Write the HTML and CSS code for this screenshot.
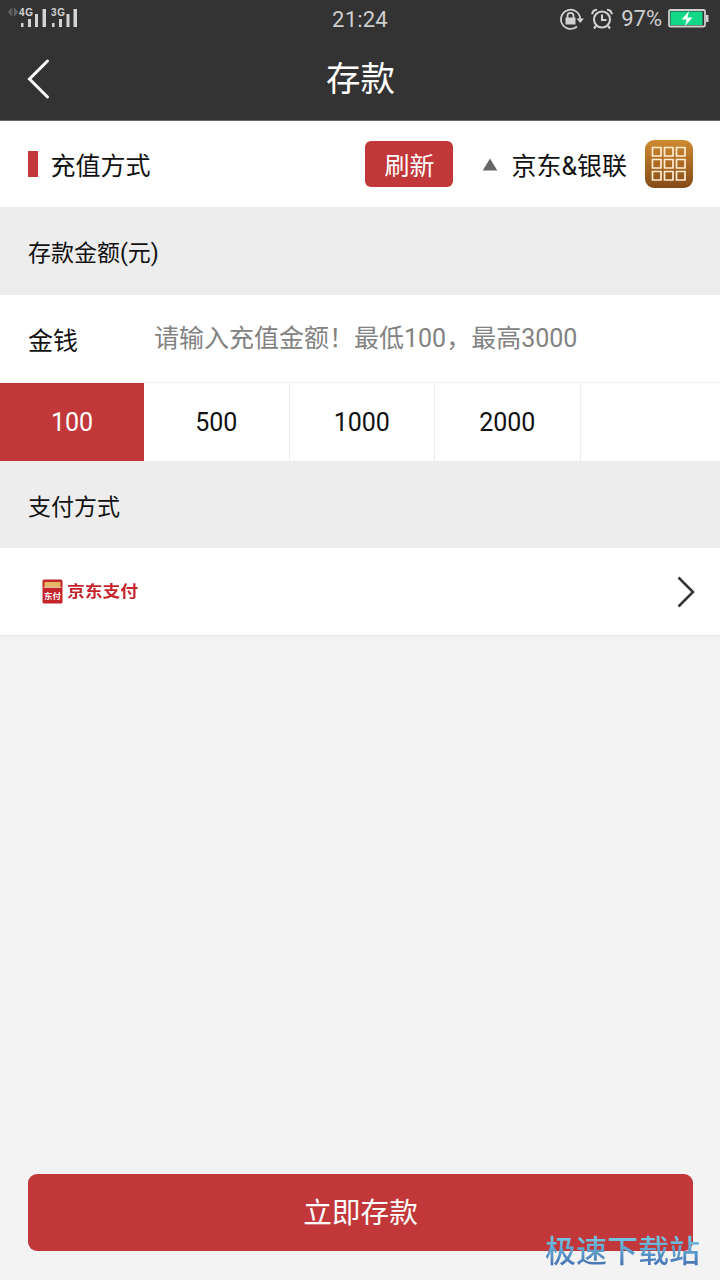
FILE: index.html
```html
<!DOCTYPE html>
<html lang="zh-CN">
<head>
<meta charset="utf-8">
<title>存款</title>
<link rel="stylesheet" href="styles.css">
</head>
<body>
<div class="screen">
  <div class="status">
    <svg class="signals" width="80" height="28" viewBox="0 0 80 28">
      <path fill="#666" d="M8 12l3-4v8zM12.500 8v8h-1V8zM14 8h1v8h-1zM15 8l3 4-3 4z"/>
      <g class="signal-label"><text x="19" y="16" textLength="14">4G</text><text x="51" y="16" textLength="14">3G</text></g>
      <path fill="#d4d4d4" d="M21 23h2.500v4H21zM28 19h3v8h-3zM35 14h3v13h-3zM42.500 9H46v18h-3.500zM52 23h2.500v4H52zM59 19h3v8h-3zM66.500 14h3v13h-3zM73.500 9H77v18h-3.500z"/>
    </svg>
    <span class="clock">21:24</span>
    <div class="status-right">
      <svg width="25" height="24" viewBox="0 0 25 24" fill="none" stroke="#d2d2d2" stroke-width="1.800">
        <path d="M18 19.500A9.600 9.600 0 1 1 21.200 12"/>
        <path d="M17.500 11.500h7.500L21.200 16z" fill="#d2d2d2" stroke="none"/>
        <path d="M6.500 10.500h10v7h-10z" fill="#d2d2d2" stroke="none"/>
        <path d="M8.500 11V8.800a3 3 0 0 1 6 0V11"/>
      </svg>
      <svg class="alarm" width="22" height="22" viewBox="0 0 22 22" fill="none" stroke="#d2d2d2" stroke-width="2.100">
        <circle cx="11" cy="11.500" r="8"/>
        <path d="M11 6.500v5.500h4.500M1.200 6.200Q1.500 2 6 1.700M20.800 6.200Q20.500 2 16 1.700M5 18l-2 2.500M17 18l2 2.500"/>
      </svg>
      <span class="percent">97%</span>
      <svg class="battery" width="41" height="19" viewBox="0 0 41 19">
        <rect x="1" y="1" width="36" height="16.500" rx="1.500" fill="#333" stroke="#cfcfcf" stroke-width="1.800"/>
        <rect x="2.500" y="2.500" width="32" height="13.500" fill="#10d887"/>
        <path d="M38 6h2.500v7H38z" fill="#cfcfcf"/>
        <path d="M21 2l-7.500 8.500h5L17 17l7.500-8.500h-5z" fill="#f5fff9"/>
      </svg>
    </div>
  </div>

  <header class="header">
    <svg class="back" width="24" height="42" viewBox="0 0 24 42"><path d="M20.500 3L2.500 21l18 18" fill="none" stroke="#fff" stroke-width="3" stroke-linecap="round"/></svg>
    <h1 class="title">存款</h1>
  </header>

  <section class="method">
    <i class="marker"></i>
    <span class="method-label">充值方式</span>
    <button class="refresh">刷新</button>
    <svg class="caret" width="16" height="13" viewBox="0 0 16 13"><path d="M8 .5L15.300 12.500H.700z" fill="#666"/></svg>
    <span class="channel">京东&amp;银联</span>
    <svg class="grid-icon" width="48" height="48" viewBox="0 0 48 48">
      <defs>
        <linearGradient id="bronze" x1="0" y1="0" x2="0" y2="1"><stop offset="0" stop-color="#d08a32"/><stop offset="1" stop-color="#854a17"/></linearGradient>
      </defs>
      <rect width="48" height="48" rx="9" fill="url(#bronze)"/>
      <path fill="none" stroke="#ffedd2" stroke-width="1.700" d="M7.500 7.500h8.500v8.500H7.500zM19.500 7.500h8.500v8.500h-8.500zM31.500 7.500H40v8.500h-8.500zM7.500 19.500h8.500v8.500H7.500zM19.500 19.500h8.500v8.500h-8.500zM31.500 19.500H40v8.500h-8.500zM7.500 31.500h8.500V40H7.500zM19.500 31.500h8.500V40h-8.500zM31.500 31.500H40V40h-8.500z"/>
    </svg>
  </section>

  <h2 class="section-title">存款金额(元)</h2>

  <label class="amount">
    <span class="amount-label">金钱</span>
    <input class="amount-input" type="text" placeholder="请输入充值金额！最低100，最高3000">
  </label>

  <div class="presets">
    <button class="preset preset-active">100</button>
    <button class="preset">500</button>
    <button class="preset">1000</button>
    <button class="preset">2000</button>
  </div>

  <h2 class="section-title section-pay">支付方式</h2>

  <div class="pay-row">
    <svg class="pay-icon" width="21" height="25" viewBox="0 0 21 25">
      <rect x=".5" y=".5" width="20" height="24" rx="1.500" fill="#c5242b"/>
      <path d="M2.500 3h16v5h-16z" fill="#e5b768"/>
      <path d="M1.500 8.500h18" stroke="#f3d9c9" stroke-width=".8"/>
      <text class="pay-icon-text" x="10.500" y="19.500" text-anchor="middle">东付</text>
    </svg>
    <span class="pay-name">京东支付</span>
    <svg class="chevron" width="18" height="32" viewBox="0 0 18 32"><path d="M1.500 1.500L16 16 1.500 30.500" fill="none" stroke="#333" stroke-width="2.500"/></svg>
  </div>

  <footer class="footer">
    <button class="submit">立即存款</button>
  </footer>
  <span class="watermark">极速下载站</span>
</div>
</body>
</html>
```

FILE: styles.css
```css
* { box-sizing: border-box; }
body { margin: 0; }
body, button, input { font-family: Roboto, "Noto Sans CJK SC", sans-serif; }
button { border: 0; padding: 0; background: none; color: #111; }
h1, h2 { margin: 0; font-weight: 400; }
svg { display: block; flex: none; }

.screen {
  position: relative;
  width: 720px;
  height: 1280px;
  display: flex;
  flex-direction: column;
  background: #f3f3f3;
  color: #111;
  overflow: hidden;
}

.status {
  height: 37px;
  display: grid;
  grid-template-columns: 1fr auto 1fr;
  background: #333;
  color: #cfcfcf;
}
.signal-label { font: bold 10px "Liberation Sans", sans-serif; fill: #d4d4d4; }
.clock { font-size: 22px; line-height: 39px; letter-spacing: .2px; }
.status-right { display: flex; justify-content: flex-end; align-items: center; padding: 0 11px 2px 0; }
.alarm { margin-left: 7px; }
.percent { margin: 0 6px 0 8px; font-size: 22px; line-height: 35px; }

.header {
  height: 84px;
  display: grid;
  grid-template-columns: 100px 1fr 100px;
  align-items: center;
  background: #333;
  border-bottom: 1px solid #666;
}
.back { margin-left: 27px; }
.title { padding-left: 1px; text-align: center; font-size: 34.500px; line-height: 82px; color: #fff; }

.method {
  height: 86px;
  display: flex;
  align-items: center;
  padding: 0 27px 0 28px;
  background: #fff;
  font-size: 25px;
}
.marker { width: 10px; height: 26px; background: #c1373a; }
.method-label { margin-left: 12.500px; }
.refresh {
  width: 88px;
  height: 46px;
  margin-left: auto;
  border-radius: 6px;
  background: #c1373a;
  color: #fff;
  font-size: 25px;
}
.caret { margin-left: 29px; }
.channel { margin: 0 18px 0 13px; }

.section-title {
  height: 88px;
  padding-left: 28px;
  background: #ededed;
  font-size: 23px;
  line-height: 93px;
}
.section-pay { height: 87px; }

.amount {
  height: 88px;
  display: flex;
  align-items: center;
  padding-left: 28px;
  background: #fff;
  border-bottom: 1px solid #f0f0f0;
  font-size: 25px;
}
.amount-label { width: 126px; padding-top: 1px; }
.amount-input { flex: 1; border: 0; padding: 0; outline: 0; background: none; font-size: 25px; }
.amount-input::placeholder { color: #828282; }

.presets { height: 78px; display: flex; background: #fff; }
.preset { width: 145.500px; border-right: 1px solid #eee; font-size: 25px; }
.preset-active { width: 144px; border: 0; background: #c1373a; color: #fff; }

.pay-row {
  height: 88px;
  display: flex;
  align-items: center;
  padding: 0 25px 0 42px;
  background: #fff;
  border-bottom: 1px solid #e5e5e5;
}
.pay-icon-text { font: bold 8.500px "Noto Sans CJK SC", sans-serif; fill: #fff; }
.pay-name {
  margin: 0 0 3px 4px;
  font-size: 17.800px;
  font-weight: 700;
  color: #c5242b;
  transform: scaleY(.88);
}
.chevron { margin-left: auto; }

.footer { margin-top: auto; padding: 0 27px 29px 28px; }
.submit {
  width: 100%;
  height: 77px;
  padding-bottom: 4px;
  border-radius: 9px;
  background: #c1373a;
  color: #fff;
  font-size: 28.700px;
  display: block;
}

.watermark {
  position: absolute;
  right: 20px;
  bottom: 6px;
  font-size: 31px;
  line-height: 44px;
  font-weight: 500;
  background: linear-gradient(#72c4e2 20%, #4772b3 80%);
  background-clip: text;
  -webkit-background-clip: text;
  color: transparent;
}
```
